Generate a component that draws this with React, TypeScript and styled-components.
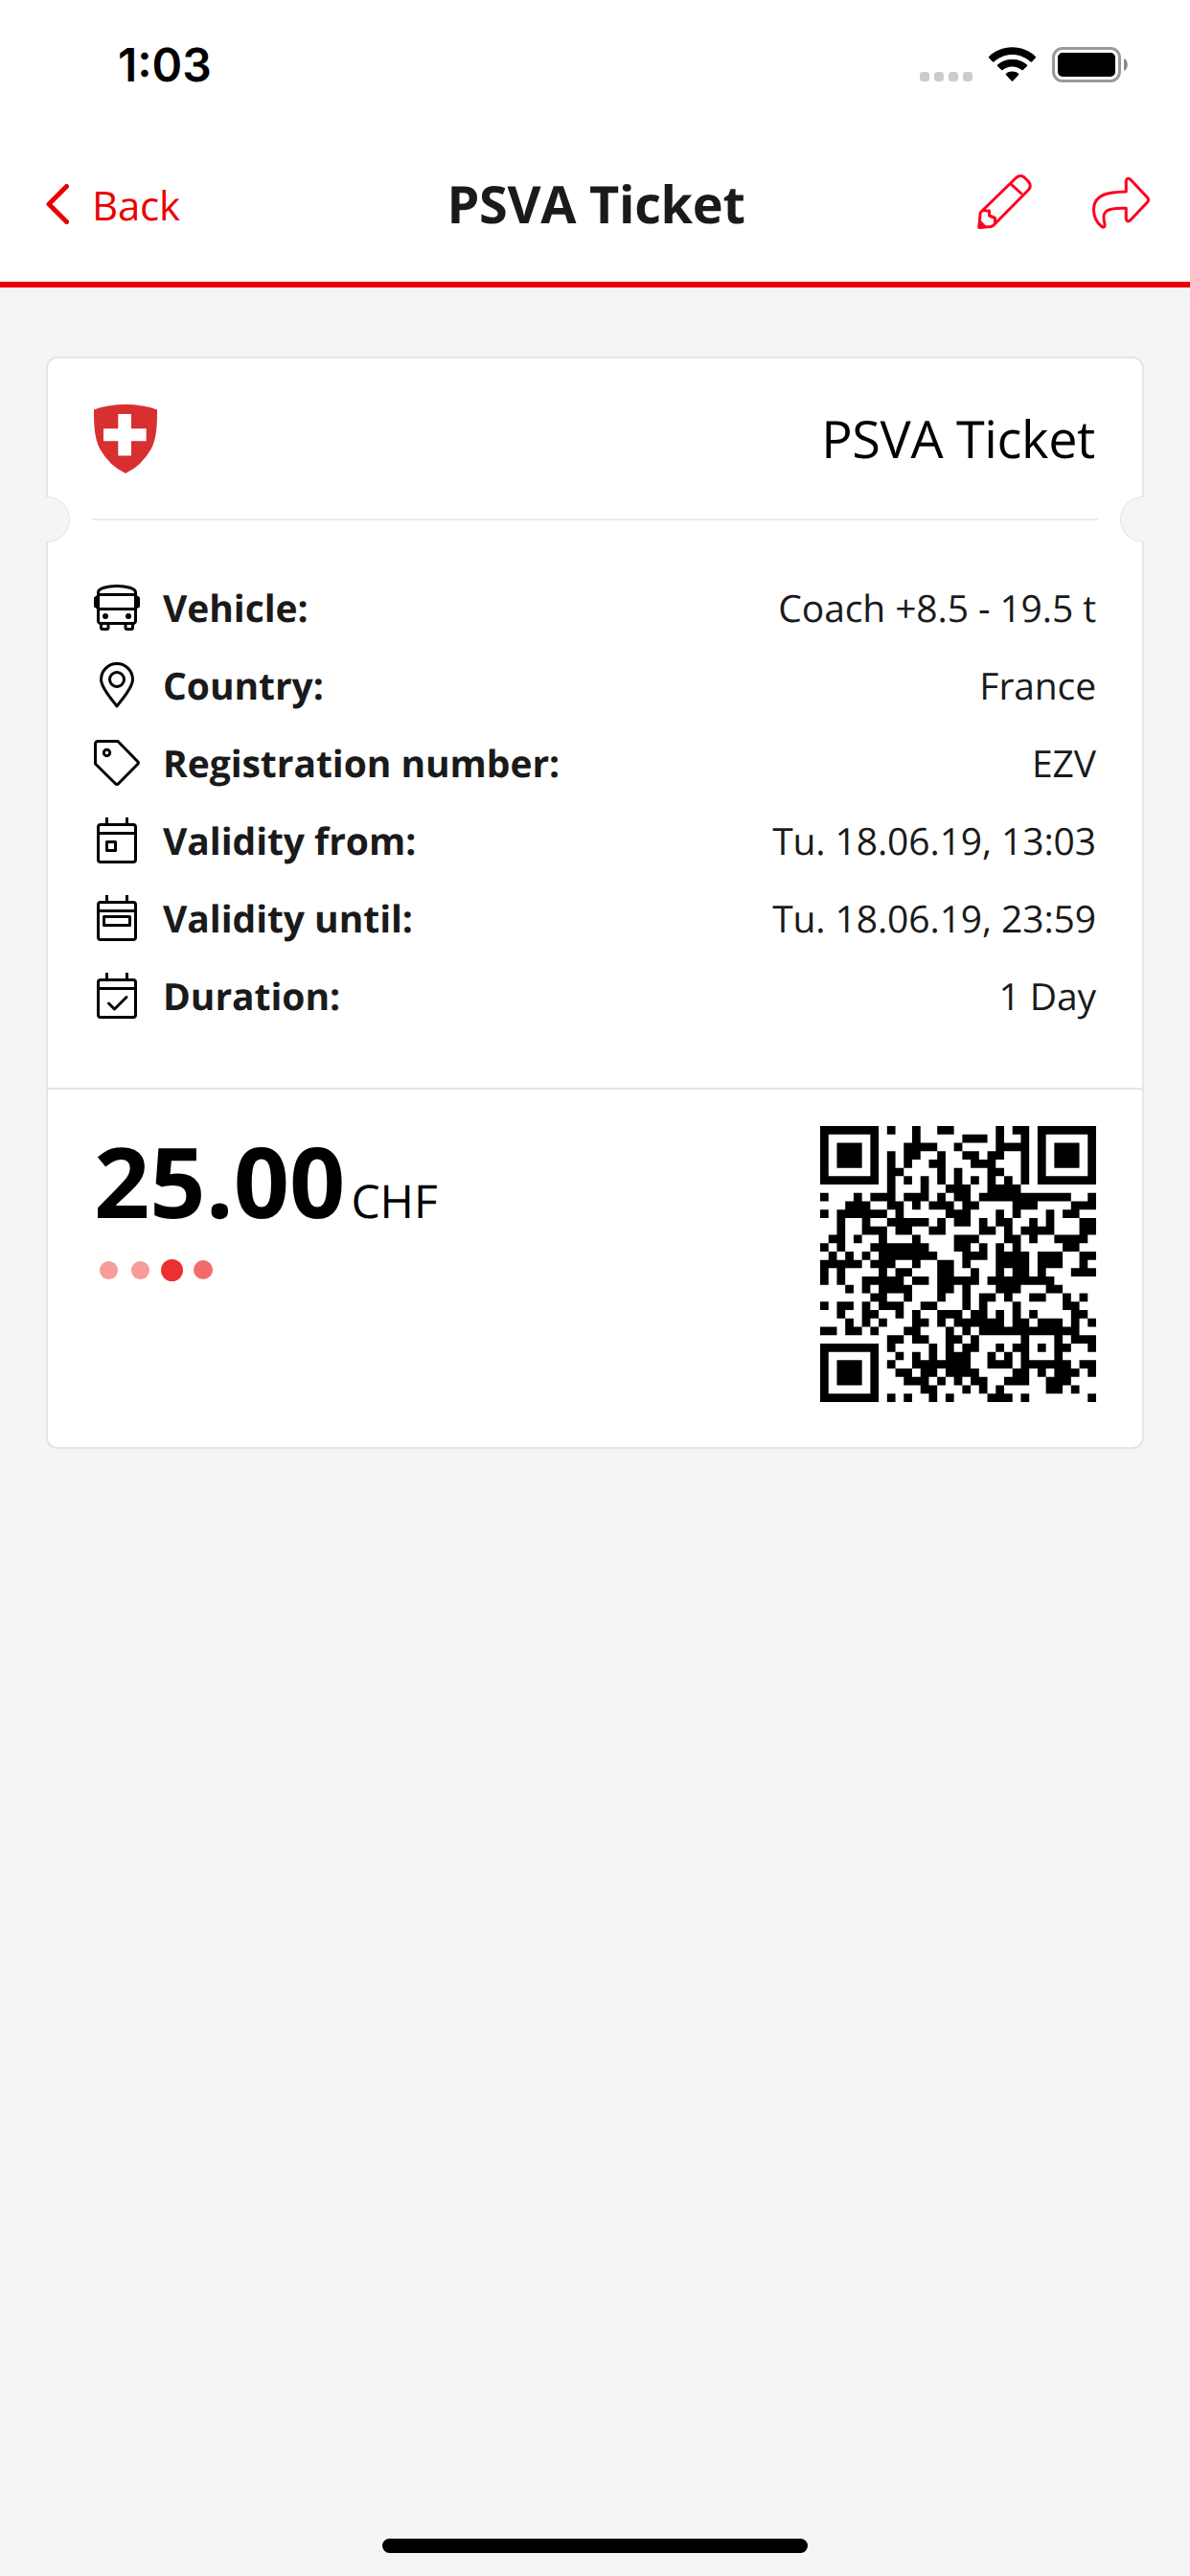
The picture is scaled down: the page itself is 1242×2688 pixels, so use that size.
import { ReactNode } from "react"
import styled, { createGlobalStyle } from "styled-components"

interface Detail {
    label: string
    value: string
    icon: ReactNode
}

// dark modules of every code row, as single columns or from-to ranges
const qrRows = [
    "0-6 8 11 14-15 21 23-24 26-32",
    "0 6 11 17-19 21 24 26 32",
    "0 2-4 6 10-13 16 21-24 26 28-30 32",
    "0 2-4 6 8 10-11 14 17-18 20-21 24 26 28-30 32",
    "0 2-4 6 8 10 13-14 18-20 24 26 28-30 32",
    "0 6 8-9 14 16 20-21 24 26 32",
    "0-6 8 10 12 14 16 18 20 22 24 26-32",
    "8 12 15-17 20-23",
    "0 4 6-8 10-12 14 16-17 19-29 32",
    "3-5 8-9 11 13-15 17-18 23-25 30-32",
    "0 2-7 9 15-17 21 23 27 29-30",
    "2 5 8-12 14 16-17 19 21-22 25 27 31-32",
    "2 5-7 9-10 13-14 19-20 22 24-27 31-32",
    "1-2 4 7 11 16-18 22-23 25 28-31",
    "0 2 6-12 16-17 19 21 23 29-30",
    "1 3 5 7-13 17-19 21-24 26-28 31-32",
    "0-4 6-8 11 14-15 17 21-24 26-28 31",
    "0 2 7 9-10 14-15 18 21 23-24 26 30-32",
    "0 2 5-9 11-12 14-18 20-27",
    "3 5 7-10 14-15 17 21-23 27-28",
    "6-7 10 14 17 19-20 22 25-26 29 31",
    "0 2-3 5 7-9 12-13 17 19 23 29-30",
    "2 5-6 9 11 14-16 18-19 21 23 25 30-31",
    "3 5 7 11-12 14 16-21 23-24 26-28 30 32",
    "0-1 3-4 6 10-11 15 17 19-30",
    "8-9 11-12 15-16 18 24 28 30-32",
    "0-6 8 13 15 17-18 21 23-24 26 28-29 32",
    "0 6 9 11 13 15-17 20 22 24 28",
    "0 2-4 6 8 11-17 20-22 24-29 31-32",
    "0 2-4 6 9-10 12-13 15-18 23-24 26 28-30 32",
    "0 2-4 6 10-12 14 16 18-19 22-24 27-29",
    "0 6 12-13 17 19 21 27-28 30",
    "0-6 8 10 13 15 20-22 24 32",
]

const qrPath = qrRows
    .map((row, y) =>
        row
            .split(" ")
            .map((run) => {
                const [from, to = from] = run.split("-").map(Number)
                return `M${from} ${y}H${to + 1}V${y + 1}H${from}Z`
            })
            .join("")
    )
    .join("")

const BusIcon = () => (
    <LineIcon viewBox="0 0 48 48">
        <path d="M4.5 10.5V8C4.5 4 14 1.5 24 1.5S43.5 4 43.5 8V38A2.5 2.5 0 0 1 41 40.5H7A2.5 2.5 0 0 1 4.5 38ZM4.5 10.5H43.5M4.5 25.5H43.5" />
        <path d="M7.5 40.5V45A1.5 1.5 0 0 0 9 46.5H13.5A1.5 1.5 0 0 0 15 45V40.5M33 40.5V45A1.5 1.5 0 0 0 34.5 46.5H39A1.5 1.5 0 0 0 40.5 45V40.5" />
        <path d="M1.5 14V22.5M46.5 14V22.5M3 13V23.5M45 13V23.5" />
        <circle cx="12" cy="33" r="3" fill="#000" stroke="none" />
        <circle cx="36" cy="33" r="3" fill="#000" stroke="none" />
    </LineIcon>
)

const PinIcon = () => (
    <LineIcon viewBox="0 0 48 48">
        <path d="M24 46C20.5 40.5 7.5 27.5 7.5 18A16.5 16.5 0 0 1 40.5 18C40.5 27.5 27.5 40.5 24 46Z" />
        <circle cx="24" cy="18" r="7.5" />
    </LineIcon>
)

const TagIcon = () => (
    <LineIcon viewBox="0 0 48 48">
        <path d="M1.5 4A2.5 2.5 0 0 1 4 1.5H25L45.8 22.8Q47 24 45.8 25.2L25.5 45.8Q24 47 22.5 45.8L1.5 25Z" />
        <circle cx="13.5" cy="13.5" r="3.2" />
    </LineIcon>
)

const CalendarIcon = ({ children }: { children: ReactNode }) => (
    <LineIcon viewBox="0 0 48 48">
        <rect x="4.5" y="7.5" width="39" height="39" rx="2.5" />
        <path d="M4.5 16.5H43.5M13.5 0V7.5M34.5 0V7.5" strokeLinecap="butt" />
        {children}
    </LineIcon>
)

const details: Detail[] = [
    { label: "Vehicle:", value: "Coach +8.5 - 19.5 t", icon: <BusIcon /> },
    { label: "Country:", value: "France", icon: <PinIcon /> },
    { label: "Registration number:", value: "EZV", icon: <TagIcon /> },
    {
        label: "Validity from:",
        value: "Tu. 18.06.19, 13:03",
        icon: <CalendarIcon><rect x="13.5" y="25.5" width="9" height="9" /></CalendarIcon>
    },
    {
        label: "Validity until:",
        value: "Tu. 18.06.19, 23:59",
        icon: <CalendarIcon><rect x="10.5" y="22.5" width="27" height="9" /></CalendarIcon>
    },
    {
        label: "Duration:",
        value: "1 Day",
        icon: <CalendarIcon><path d="M15.5 32L21.5 38L34 25.5" /></CalendarIcon>
    },
]

const StatusIcons = () => (
    <StatusSvg viewBox="0 0 220 40">
        <g fill="#ccc">
            <rect x="1" y="27" width="10" height="10" rx="3.5" />
            <rect x="16" y="27" width="10" height="10" rx="3.5" />
            <rect x="31" y="27" width="10" height="10" rx="3.5" />
            <rect x="46" y="27" width="10" height="10" rx="3.5" />
        </g>
        <path d="M73 12.2Q72.6 11.5 73.2 10.9C79 5 88 1.2 97.5 1.2S116 5 121.8 10.9Q122.4 11.5 121.9 12.2L118 16.5Q117.3 17 116.6 16.5C111 11.5 104.5 9 97.5 9S84 11.5 78.4 16.5Q77.7 17 77 16.5Z" />
        <path d="M82 20.9Q81.5 20.2 82.2 19.6C86 16 91 14 97.5 14S109 16 112.8 19.6Q113.5 20.2 113 20.9L108.8 25Q108.1 25.6 107.4 25C104.5 22.7 101.3 21.5 97.5 21.5S90.5 22.7 87.6 25Q86.9 25.6 86.2 25Z" />
        <path d="M90.8 30Q90.2 29.4 91 28.7C92.8 27.2 95 26.5 97.5 26.5S102.2 27.2 104 28.7Q104.8 29.4 104.2 30L98.2 36.4Q97.5 37 96.8 36.4Z" />
        <rect x="140.5" y="2.5" width="69" height="34" rx="9.5" fill="none" stroke="#999" strokeWidth="3" />
        <rect x="145" y="7" width="60" height="25" rx="5" />
        <path d="M214 13C219 15 219 24 214 26Z" fill="#888" />
    </StatusSvg>
)

const PencilIcon = () => (
    <ActionIcon viewBox="0 0 60 60">
        <path d="M2 57L3 43.5Q3 42 4 41L40.5 5.5Q45 1.8 49 5L53.5 9.5Q57 14 53.5 18L17.5 54.5Q16 56.2 14 56.5L2 57.5ZM35 12L46.5 22.5M5 39.5L12.5 40V45L18.5 47.5V53.5" />
        <path d="M2.5 51L8 56.5L2 57Z" fill="#ff001f" />
    </ActionIcon>
)

const ShareIcon = () => (
    <ActionIcon viewBox="0 0 60 60">
        <path d="M35.3 20V9Q36 4.5 40 7.5L57.5 26Q59.5 28.5 57.5 31L40 49.5Q36 53 35.3 48V37.2C27 37 18 37 14.5 40.5C11 44 11.8 48 13 54Q13.5 58 10 56.5C4 52 1.5 46 1.5 38.5C1.5 22 18 20.5 35.3 20Z" />
    </ActionIcon>
)

const Shield = () => (
    <ShieldSvg viewBox="0 0 66 72">
        <path d="M0 5.5Q15 0 33 0T66 5.5C66 22 65.5 35 60 46Q50 64 33 72Q16 64 6 46C.5 35 0 22 0 5.5Z" fill="#d82f31" />
        <path d="M25.3 10H39V25.2H54.7V38.2H39V53.5H25.3V38.2H10V25.2H25.3Z" fill="#fff" />
    </ShieldSvg>
)

const App = () => {
    return (
        <Screen>
            <GlobalStyle />
            <StatusBar>
                <Time>1:03</Time>
                <StatusIcons />
            </StatusBar>
            <NavBar>
                <BackButton>
                    <BackArrow viewBox="0 0 24 42">
                        <path d="M21.5 2.5L3 21L21.5 39.5" />
                    </BackArrow>
                    <BackLabel>Back</BackLabel>
                </BackButton>
                <NavTitle>PSVA Ticket</NavTitle>
                <Actions>
                    <PencilIcon />
                    <ShareIcon />
                </Actions>
            </NavBar>
            <Content>
                <Card>
                    <CardHeader>
                        <Shield />
                        <CardTitle>PSVA Ticket</CardTitle>
                    </CardHeader>
                    <Perforation>
                        <Notch $side="left" />
                        <Notch $side="right" />
                    </Perforation>
                    <Details>
                        {details.map((item) => (
                            <Row key={item.label}>
                                {item.icon}
                                <Label>{item.label}</Label>
                                <Value>{item.value}</Value>
                            </Row>
                        ))}
                    </Details>
                    <CardFooter>
                        <div>
                            <Price>
                                <Amount>25.00</Amount>
                                <Currency>CHF</Currency>
                            </Price>
                            <Dots>
                                <Dot $size={19} $color="#f79b9b" />
                                <Dot $size={19} $color="#f79b9b" />
                                <Dot $size={23} $color="#ec2f31" />
                                <Dot $size={20} $color="#f36a6b" />
                            </Dots>
                        </div>
                        <QrCode viewBox="0 0 33 33">
                            <path d={qrPath} />
                        </QrCode>
                    </CardFooter>
                </Card>
            </Content>
            <HomeIndicator />
        </Screen>
    )
}

export default App


const GlobalStyle = createGlobalStyle`
    * {
        box-sizing: border-box;
    }

    body {
        margin: 0;
        font-family: "Open Sans", "Noto Sans", sans-serif;
        text-rendering: geometricPrecision;
        color: #1a1a1a;
    }
`

const Screen = styled.div`
    display: flex;
    flex-direction: column;
    width: 1242px;
    height: 2688px;
    background-color: #f5f5f5;
`

const StatusBar = styled.div`
    display: flex;
    align-items: flex-start;
    justify-content: space-between;
    height: 132px;
    padding: 48px 63px 0 123px;
    background-color: white;
`

const Time = styled.span`
    font-family: Inter, sans-serif;
    font-size: 48px;
    font-weight: 600;
    line-height: 40px;
    color: black;
`

const StatusSvg = styled.svg`
    width: 220px;
    height: 40px;
`

const NavBar = styled.header`
    display: grid;
    grid-template-columns: 1fr auto 1fr;
    align-items: center;
    height: 168px;
    padding: 0 42px 0 48px;
    background-color: white;
    border-bottom: 6px solid #eb0000;
`

const BackButton = styled.div`
    display: flex;
    align-items: center;
    gap: 24px;
    font-size: 42px;
    color: #eb0000;
`

const BackArrow = styled.svg`
    width: 24px;
    height: 42px;
    fill: none;
    stroke: #eb0000;
    stroke-width: 5;
    stroke-linecap: round;
    stroke-linejoin: round;
`

const BackLabel = styled.span`
    padding-top: 2px;
    letter-spacing: -0.2px;
`

const NavTitle = styled.h1`
    margin: 0;
    padding: 0 4px 2px 0;
    font-size: 54px;
    font-weight: 700;
    letter-spacing: -0.3px;
`

const Actions = styled.div`
    display: flex;
    justify-content: flex-end;
    gap: 60px;
    padding-bottom: 6px;
`

const ActionIcon = styled.svg`
    width: 60px;
    height: 60px;
    fill: none;
    stroke: #ff001f;
    stroke-width: 3;
    stroke-linejoin: round;
`

const Content = styled.main`
    flex: 1;
    padding: 72px 48px 0;
`

const Card = styled.section`
    height: 1140px;
    background-color: white;
    border: 2px solid #e5e5e5;
    border-radius: 12px;
`

const CardHeader = styled.div`
    display: flex;
    align-items: center;
    justify-content: space-between;
    height: 167px;
    padding: 0 48px;
`

const ShieldSvg = styled.svg`
    width: 66px;
    height: 72px;
`

const CardTitle = styled.h2`
    margin: 0;
    padding: 0 1px 2px 0;
    font-size: 54px;
    font-weight: 400;
    letter-spacing: -0.35px;
    color: black;
`

const Perforation = styled.div`
    position: relative;
    height: 2px;
    margin: 0 46px;
    background-color: #ebebeb;
`

const Notch = styled.div<{ $side: "left" | "right" }>`
    position: absolute;
    top: -23px;
    ${({ $side }) => $side}: -48px;
    width: 25px;
    height: 48px;
    background-color: #f5f5f5;
    border: 1.5px solid #e5e5e5;
    border-${({ $side }) => $side}: none;
    border-radius: ${({ $side }) => ($side === "left" ? "0 24px 24px 0" : "24px 0 0 24px")};
`

const Details = styled.div`
    height: 592px;
    padding: 50.5px 48px 0;
`

const Row = styled.div`
    display: flex;
    align-items: center;
    height: 81px;
    font-size: 39px;
`

const LineIcon = styled.svg`
    width: 48px;
    height: 48px;
    margin-right: 24px;
    fill: none;
    stroke: black;
    stroke-width: 3;
    stroke-linecap: round;
    stroke-linejoin: round;
`

const Label = styled.span`
    font-weight: 700;
    letter-spacing: -0.05px;
`

const Value = styled.span`
    margin-left: auto;
    letter-spacing: -0.1px;
`

const CardFooter = styled.div`
    display: flex;
    justify-content: space-between;
    padding: 38px 48px 0;
    border-top: 2px solid #e5e5e5;
`

const Price = styled.div`
    display: flex;
    align-items: baseline;
    gap: 6px;
    margin-top: -3px;
    color: black;
`

const Amount = styled.span`
    font-size: 102px;
    font-weight: 700;
    line-height: 120px;
`

const Currency = styled.span`
    font-size: 48px;
    line-height: 1;
`

const Dots = styled.div`
    display: flex;
    align-items: center;
    height: 34px;
    margin: 16px 0 0 -1.5px;
`

const Dot = styled.span<{ $size: number; $color: string }>`
    width: ${({ $size }) => $size}px;
    height: ${({ $size }) => $size}px;
    margin: 0 ${({ $size }) => (33 - $size) / 2}px;
    border-radius: 50%;
    background-color: ${({ $color }) => $color};
`

const QrCode = styled.svg`
    width: 288px;
    height: 288px;
`

const HomeIndicator = styled.div`
    align-self: center;
    width: 444px;
    height: 15px;
    margin-bottom: 24px;
    border-radius: 8px;
    background-color: black;
`
